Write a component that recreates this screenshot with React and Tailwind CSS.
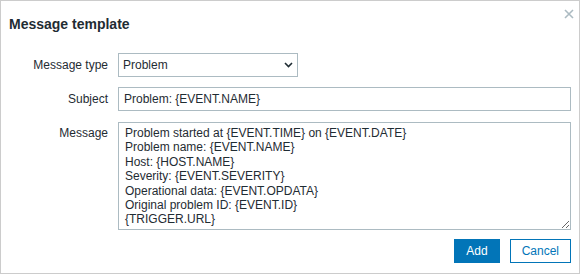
import React, { useState } from 'react';

export default function App() {
  const [type, setType] = useState('Problem');
  const [subject, setSubject] = useState('Problem: {EVENT.NAME}');
  const [message, setMessage] = useState(
    'Problem started at {EVENT.TIME} on {EVENT.DATE}\nProblem name: {EVENT.NAME}\nHost: {HOST.NAME}\nSeverity: {EVENT.SEVERITY}\nOperational data: {EVENT.OPDATA}\nOriginal problem ID: {EVENT.ID}\n{TRIGGER.URL}'
  );

  return (
    <div className="relative w-[580px] h-[274px] bg-white border border-[#cccccc] text-[12px] text-[#1f2c33] font-['Liberation_Sans',Arial,sans-serif]">
      {/* Header */}
      <div className="h-[52px] pl-[8px] pt-[15px]">
        <h2 className="text-[14px] leading-[16px] font-bold">Message template</h2>
      </div>
      <button className="absolute right-[5px] top-[8px] w-[10px] h-[10px]" aria-label="Close">
        <svg width="10" height="10" viewBox="0 0 10 10">
          <path d="M1 1 L9 9 M9 1 L1 9" stroke="#acbbc2" strokeWidth="1.6" />
        </svg>
      </button>

      {/* Form */}
      <div className="grid grid-cols-[107px_1fr] gap-x-[10px] pr-[8px]">
        <label className="text-right leading-[24px]">Message type</label>
        <div className="relative w-[180px] h-[24px]">
          <select
            value={type}
            onChange={(e) => setType(e.target.value)}
            className="appearance-none w-full h-full border border-[#acbbc2] bg-white pl-[4px] pr-[20px] text-[12px] text-[#1f2c33] outline-none"
          >
            <option>Problem</option>
            <option>Recovery</option>
            <option>Update</option>
          </select>
          <svg className="absolute right-[5px] top-[9px] pointer-events-none" width="9" height="6" viewBox="0 0 9 6">
            <path d="M1 1 L4.5 4.5 L8 1" fill="none" stroke="#1f2c33" strokeWidth="1.6" />
          </svg>
        </div>

        <label className="text-right leading-[24px] mt-[10px]">Subject</label>
        <input
          value={subject}
          onChange={(e) => setSubject(e.target.value)}
          className="mt-[10px] h-[24px] border border-[#acbbc2] px-[5px] text-[12px] text-[#1f2c33] outline-none"
        />

        <label className="text-right leading-[14.4px] mt-[11px] pt-[4px]">Message</label>
        <textarea
          value={message}
          onChange={(e) => setMessage(e.target.value)}
          className="mt-[11px] h-[108px] border border-[#acbbc2] px-[6px] py-[3px] text-[12px] leading-[14.4px] text-[#1f2c33] outline-none"
        />
      </div>

      {/* Footer */}
      <div className="flex justify-end gap-[10px] pr-[8px] mt-[9px]">
        <button className="h-[24px] px-[11px] bg-[#0275b8] border border-[#0275b8] text-white text-[12px]">Add</button>
        <button className="h-[24px] px-[11px] bg-white border border-[#0275b8] text-[#0275b8] text-[12px]">Cancel</button>
      </div>
    </div>
  );
}
